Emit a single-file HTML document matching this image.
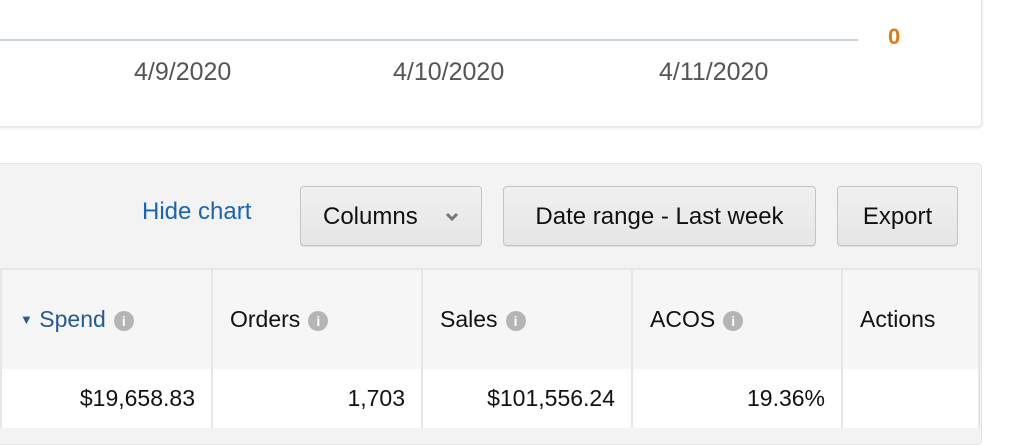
<!DOCTYPE html>
<html><head><style>
body{margin:0;width:1010px;height:428px;overflow:hidden;background:#fff;font-family:"Liberation Sans",sans-serif;position:relative}
.card{position:absolute;left:-10px;top:-10px;width:990px;height:135px;background:#fff;border:1px solid #e3e3e3;border-radius:4px;box-shadow:0 1px 3px rgba(0,0,0,.12)}
.axis{position:absolute;left:0;top:39px;width:858px;height:2px;background:#c9d3dc}
.lbl{position:absolute;top:58px;font-size:25px;color:#555}
.zero{position:absolute;left:888px;top:24px;font-size:22px;font-weight:bold;color:#e07b12}
.panel{position:absolute;left:-10px;top:163px;width:990px;height:280px;background:#f3f3f3;border:1px solid #e3e3e3;border-radius:4px}
.btn{position:absolute;top:186px;height:60px;border:1px solid #c4c4c4;border-radius:4px;background:linear-gradient(#f0f0f0,#e6e6e6);box-shadow:0 1px 0 rgba(0,0,0,.08);font-size:24px;color:#111;line-height:60px;text-align:center;box-sizing:border-box}
.hide{position:absolute;left:142px;top:198px;font-size:24px;color:#1a64b5}
.hdr{position:absolute;top:268px;left:0;width:979px;height:99px;background:#f6f6f6;border-top:2px solid #e6e6e6;border-bottom:2px solid #e6e6e6}
.row{position:absolute;top:369px;left:0;width:979px;height:59px;background:#fff}
.vl{position:absolute;top:268px;width:2px;height:160px;background:#e6e6e6}
.h{position:absolute;top:306px;font-size:23px;color:#111}
.i{display:inline-block;width:20px;height:20px;border-radius:50%;background:#b5b5b5;color:#fff;font-size:14px;font-weight:bold;text-align:center;line-height:20px;vertical-align:1px;margin-left:8px}
.d{position:absolute;top:385px;font-size:23px;color:#111;text-align:right}
</style></head><body>
<div class="card"></div>
<div class="axis"></div>
<div class="lbl" style="left:134px">4/9/2020</div>
<div class="lbl" style="left:393px">4/10/2020</div>
<div class="lbl" style="left:659px">4/11/2020</div>
<div class="zero">0</div>
<div class="panel"></div>
<div class="hide">Hide chart</div>
<div class="btn" style="left:300px;width:182px;text-align:left;padding-left:22px">Columns <svg style="position:absolute;left:144px;top:25px" width="14" height="10" viewBox="0 0 14 10"><path d="M2 2 L7 7 L12 2" stroke="#777" stroke-width="3" fill="none"/></svg></div>
<div class="btn" style="left:503px;width:313px">Date range - Last week</div>
<div class="btn" style="left:837px;width:121px">Export</div>
<div class="hdr"></div>
<div class="row"></div>
<div class="vl" style="left:0"></div>
<div class="vl" style="left:211px"></div>
<div class="vl" style="left:421px"></div>
<div class="vl" style="left:631px"></div>
<div class="vl" style="left:841px"></div>
<div class="vl" style="left:978px"></div>
<div class="h" style="left:20px;color:#245b94"><span style="font-size:13px;vertical-align:3px">&#9660;</span> Spend<span class="i">i</span></div>
<div class="h" style="left:230px">Orders<span class="i">i</span></div>
<div class="h" style="left:440px">Sales<span class="i">i</span></div>
<div class="h" style="left:650px">ACOS<span class="i">i</span></div>
<div class="h" style="left:860px">Actions</div>
<div class="d" style="left:20px;width:175px">$19,658.83</div>
<div class="d" style="left:230px;width:175px">1,703</div>
<div class="d" style="left:440px;width:175px">$101,556.24</div>
<div class="d" style="left:650px;width:175px">19.36%</div>
</body></html>
